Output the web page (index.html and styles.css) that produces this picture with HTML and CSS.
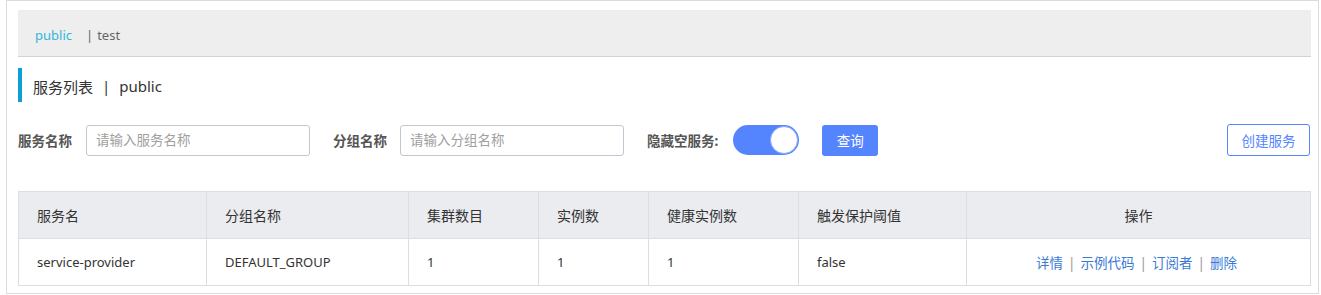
FILE: index.html
```html
<!DOCTYPE html>
<html lang="zh">
<head>
<meta charset="utf-8">
<title>服务列表</title>
<link rel="stylesheet" href="styles.css">
</head>
<body>
<div class="frame">
  <div class="ns-bar">
    <span class="ns-active">public</span>
    <span class="ns-sep">|</span>
    <span class="ns-item">test</span>
  </div>

  <div class="page-title">
    <span>服务列表</span>
    <span class="title-sep">|</span>
    <span>public</span>
  </div>

  <div class="filters">
    <label class="f-label">服务名称</label>
    <input class="f-input" type="text" placeholder="请输入服务名称">
    <label class="f-label gap">分组名称</label>
    <input class="f-input" type="text" placeholder="请输入分组名称">
    <label class="f-label gap">隐藏空服务:</label>
    <span class="switch"><span class="knob"></span></span>
    <button class="btn-primary">查询</button>
    <span class="spacer"></span>
    <button class="btn-outline">创建服务</button>
  </div>

  <table class="grid">
    <colgroup>
      <col class="c1"><col class="c2"><col class="c3"><col class="c4"><col class="c5"><col class="c6"><col class="c7">
    </colgroup>
    <thead>
      <tr>
        <th>服务名</th>
        <th>分组名称</th>
        <th>集群数目</th>
        <th>实例数</th>
        <th>健康实例数</th>
        <th>触发保护阈值</th>
        <th class="center">操作</th>
      </tr>
    </thead>
    <tbody>
      <tr>
        <td>service-provider</td>
        <td>DEFAULT_GROUP</td>
        <td>1</td>
        <td>1</td>
        <td>1</td>
        <td>false</td>
        <td class="center ops">
          <a class="link">详情</a><span class="lsep">|</span><a class="link">示例代码</a><span class="lsep">|</span><a class="link">订阅者</a><span class="lsep">|</span><a class="link">删除</a>
        </td>
      </tr>
    </tbody>
  </table>
</div>
</body>
</html>
```

FILE: styles.css
```css
* { box-sizing: border-box; }

html, body {
  margin: 0;
  padding: 0;
  background: #fff;
}

body {
  font-family: "Noto Sans", "Noto Sans CJK SC", sans-serif;
  font-size: 13px;
  color: #333;
}

.frame {
  margin-left: 6px;
  width: 1313px;
  height: 294px;
  border: 1px solid #dcdcdc;
  padding: 9px 7px 0 11px;
}

.ns-bar {
  height: 47px;
  background: #eeeeee;
  border-bottom: 1px solid #d2d2d2;
  display: flex;
  align-items: center;
  padding-left: 17px;
  padding-top: 3px;
  font-size: 13px;
}

.ns-active { color: #33b5dc; }
.ns-sep { color: #666; margin-left: 14px; margin-right: 4px; }
.ns-item { color: #666; }

.page-title {
  margin-top: 11px;
  height: 34px;
  border-left: 4px solid #0aa0d6;
  padding-left: 11px;
  padding-top: 2px;
  display: flex;
  align-items: center;
  font-size: 15px;
  color: #333;
}

.title-sep { margin: 0 9px; }

.filters {
  margin-top: 22px;
  height: 32px;
  display: flex;
  align-items: center;
}

.f-label {
  font-weight: bold;
  color: #555;
  font-size: 13.5px;
  margin-right: 14px;
}

.f-label.gap { margin-left: 23px; margin-right: 13px; }

.f-input {
  width: 224px;
  height: 31px;
  border: 1px solid #c4c6cf;
  border-radius: 3px;
  padding: 0 9px;
  font-family: inherit;
  font-size: 13.5px;
  color: #333;
  outline: none;
}

.f-input::placeholder { color: #a0a0a0; }

.switch {
  position: relative;
  width: 66px;
  height: 30px;
  border-radius: 15px;
  background: #5584ff;
  display: inline-block;
  margin-left: 2px;
}

.knob {
  position: absolute;
  right: 1px;
  top: 1px;
  width: 28px;
  height: 28px;
  border-radius: 50%;
  background: #fff;
  border: 1px solid #8aa9ff;
}

.btn-primary {
  margin-left: 23px;
  width: 56px;
  height: 31px;
  border: none;
  border-radius: 3px;
  background: #5584ff;
  color: #fff;
  font-family: inherit;
  font-size: 13.5px;
  padding: 0;
}

.spacer { flex: 1; }

.btn-outline {
  width: 83px;
  height: 32px;
  border: 1px solid #5584ff;
  border-radius: 3px;
  background: #fff;
  color: #5584ff;
  font-family: inherit;
  font-size: 13.5px;
  padding: 0;
  margin-right: 1px;
}

.grid {
  margin-top: 35px;
  width: 1292px;
  border-collapse: collapse;
  table-layout: fixed;
  border: 1px solid #dcdee3;
}

.c1 { width: 188px; }
.c2 { width: 202px; }
.c3 { width: 130px; }
.c4 { width: 110px; }
.c5 { width: 150px; }
.c6 { width: 168px; }
.c7 { width: 344px; }

.grid th, .grid td {
  border: 1px solid #dcdee3;
  text-align: left;
  padding: 0 18px;
  font-weight: normal;
  font-size: 13px;
  color: #333;
}

.grid th {
  height: 47px;
  background: #ebecf0;
  font-size: 14px;
  padding-bottom: 1px;
}

.grid td {
  height: 47px;
  background: #fff;
}

.grid .center { text-align: center; }

.grid .ops { font-size: 13.5px; padding-left: 14px; }

.link { color: #3a7ad6; }
.lsep { color: #999; margin: 0 5px; }
```
